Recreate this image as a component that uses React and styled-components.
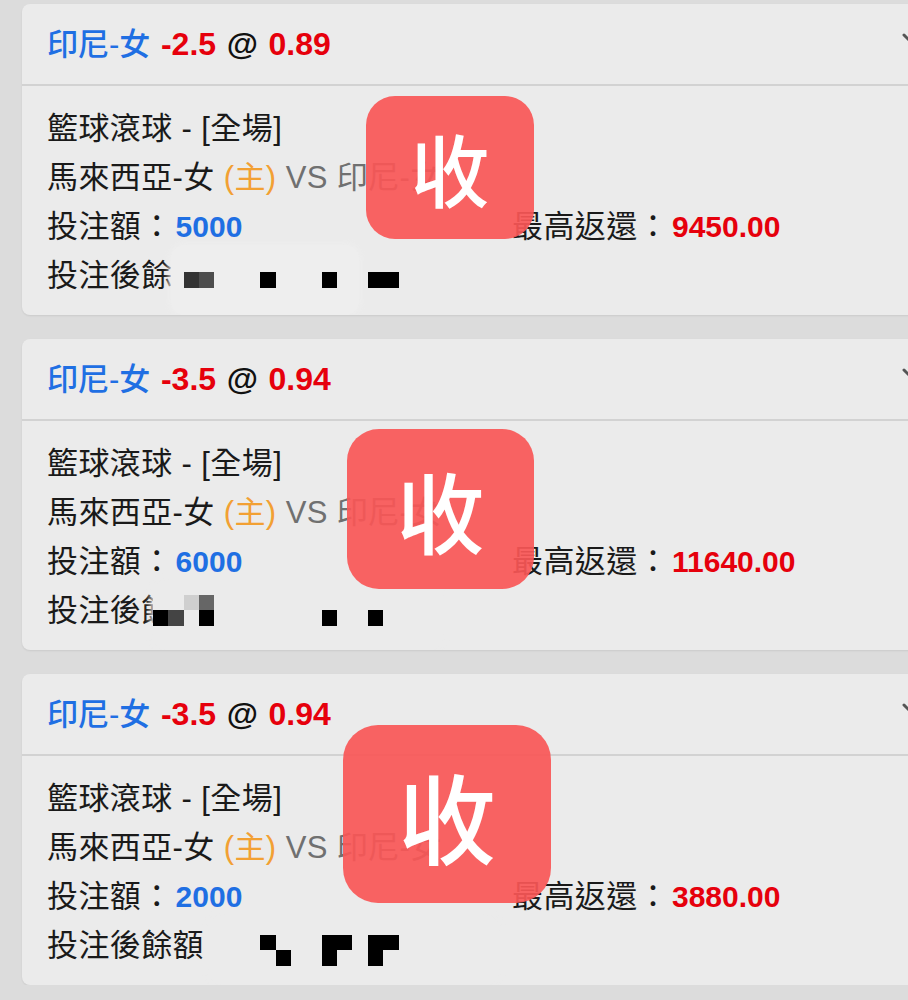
import styled, { createGlobalStyle } from 'styled-components';

const GlobalStyle = createGlobalStyle`
  html, body {
    margin : 0;
    padding : 0;
    background : #dcdcdc;
    overflow : hidden;
  }
  body {
    font-family : "Liberation Sans", "Noto Sans CJK TC", sans-serif;
  }
`;

const bets = [
    {
        handicap : '-2.5', odds : '0.89', stake : '5000', maxReturn : '9450.00',
        stamp : { left : 344, top : 92, width : 168, height : 143 },
        cover : { left : 124, light : true },
        mosaic : { top : 6, cells : [[1, 2, '#333'], [1, 3, '#4d4d4d'], [1, 7, '#000'], [1, 11, '#000'], [1, 14, '#000'], [1, 15, '#000']] },
    },
    {
        handicap : '-3.5', odds : '0.94', stake : '6000', maxReturn : '11640.00',
        stamp : { left : 325, top : 90, width : 187, height : 160 },
        cover : { left : 106 },
        mosaic : { top : 9, cells : [[0, 2, '#cfcfcf'], [0, 3, '#666'], [1, 0, '#000'], [1, 1, '#444'], [1, 3, '#000'], [1, 11, '#000'], [1, 14, '#000']] },
    },
    {
        handicap : '-3.5', odds : '0.94', stake : '2000', maxReturn : '3880.00',
        stamp : { left : 321, top : 51, width : 208, height : 178 },
        cover : { left : 162 },
        mosaic : { top : 14, cells : [[0, 7, '#000'], [1, 8, '#000'], [0, 11, '#000'], [0, 12, '#000'], [1, 11, '#000'], [0, 14, '#000'], [0, 15, '#000'], [1, 14, '#000']] },
    },
];

const Chevron = () => (
    <ChevronSvg viewBox="0 0 24 24" width="24" height="24">
        <path d="M4 8 L12 16 L20 8" fill="none" stroke="#555" strokeWidth="3" strokeLinecap="round" strokeLinejoin="round" />
    </ChevronSvg>
);

const Mosaic = ({ top, cells }) => (
    <MosaicGrid $top={top}>
        {cells.map(([row, col, color]) => (
            <MosaicCell key={`${row}-${col}`} $row={row} $col={col} $color={color} />
        ))}
    </MosaicGrid>
);

const BetCard = ({ bet }) => {
    const { handicap, odds, stake, maxReturn, stamp, cover, mosaic } = bet;

    return (
        <Card>
            <CardHeader>
                <Title>
                    <TeamText>印尼-女</TeamText> <TitleNumber>{ handicap }</TitleNumber> <At>@</At> <TitleNumber>{ odds }</TitleNumber>
                </Title>
                <Chevron />
            </CardHeader>
            <CardBody>
                <Line>籃球滾球 - [全場]</Line>
                <Line>
                    馬來西亞-女 <HomeTag>(主)</HomeTag> <Versus>VS 印尼-女</Versus>
                </Line>
                <AmountRow>
                    <span>投注額：<BlueNumber>{ stake }</BlueNumber></span>
                    <span>最高返還：<RedNumber>{ maxReturn }</RedNumber></span>
                </AmountRow>
                <BalanceLine>
                    投注後餘額：
                    <Cover $left={cover.left} $light={cover.light} />
                    <Mosaic top={mosaic.top} cells={mosaic.cells} />
                </BalanceLine>
            </CardBody>
            <Stamp $left={stamp.left} $top={stamp.top} $width={stamp.width} $height={stamp.height}>收</Stamp>
        </Card>
    );
};

const App = () => (
    <>
        <GlobalStyle />
        <Page>
            {bets.map((bet, i) => <BetCard key={i} bet={bet} />)}
        </Page>
    </>
);

const Page = styled.div`
    width : 908px;
    box-sizing : border-box;
    padding : 4px 0 0 22px;
    display : flex;
    flex-direction : column;
    gap : 24px;
    overflow : hidden;
`;

const Card = styled.div`
    position : relative;
    margin-right : -27px;
    height : 311px;
    background : #ebebeb;
    border-radius : 8px;
    box-shadow : 0 1px 2px rgba(0, 0, 0, 0.08);
    overflow : hidden;
`;

const CardHeader = styled.div`
    height : 80px;
    box-sizing : border-box;
    border-bottom : 2px solid #d2d2d2;
    display : flex;
    align-items : center;
    justify-content : space-between;
    padding : 0 11px 5px 25px;
    height : 82px;
`;

const Title = styled.div`
    font-size : 31px;
    font-weight : 700;
    color : #111;
    white-space : nowrap;
    word-spacing : 2px;
`;

const TeamText = styled.span`
    color : #1f6fe3;
    font-weight : 500;
`;

const TitleNumber = styled.span`
    color : #e6000c;
    font-weight : 700;
    font-size : 32px;
`;

const At = styled.span`
    color : #111;
    font-size : 32px;
`;

const ChevronSvg = styled.svg`
    flex-shrink : 0;
    margin-top : -6px;
`;

const CardBody = styled.div`
    padding : 18px 0 15px 25px;
    font-size : 31px;
    line-height : 49px;
    color : #1a1a1a;
    letter-spacing : 0.4px;
`;

const Line = styled.div`
    white-space : nowrap;
`;

const HomeTag = styled.span`
    color : #f2a033;
`;

const Versus = styled.span`
    color : #707070;
`;

const AmountRow = styled.div`
    display : grid;
    grid-template-columns : 465px auto;
    white-space : nowrap;
`;

const BlueNumber = styled.span`
    color : #1f6fe3;
    font-weight : 700;
    font-size : 30px;
    letter-spacing : 0;
    margin-left : 3px;
`;

const RedNumber = styled.span`
    color : #e6000c;
    font-weight : 700;
    font-size : 30px;
    letter-spacing : 0;
    margin-left : 3px;
`;

const BalanceLine = styled.div`
    position : relative;
    white-space : nowrap;
`;

const Cover = styled.div`
    position : absolute;
    left : ${({ $left }) => $left}px;
    top : -6px;
    width : ${({ $light }) => $light ? 188 : 290}px;
    height : 70px;
    background : ${({ $light }) => $light ? '#eeeeee' : '#ebebeb'};
    box-shadow : 0 0 6px 2px ${({ $light }) => $light ? '#eeeeee' : '#ebebeb'};
    border-radius : 14px;
`;

const MosaicGrid = styled.div`
    position : absolute;
    left : 106px;
    top : ${({ $top }) => $top}px;
    display : grid;
    grid-template-columns : repeat(16, 15.35px);
    grid-template-rows : repeat(2, 15.35px);
`;

const MosaicCell = styled.div`
    grid-row : ${({ $row }) => $row + 1};
    grid-column : ${({ $col }) => $col + 1};
    background : ${({ $color }) => $color};
`;

const Stamp = styled.div`
    position : absolute;
    left : ${({ $left }) => $left}px;
    top : ${({ $top }) => $top}px;
    width : ${({ $width }) => $width}px;
    height : ${({ $height }) => $height}px;
    border-radius : ${({ $width }) => Math.round($width * 0.17)}px;
    background : rgba(249, 86, 86, 0.92);
    color : #fff;
    display : flex;
    align-items : center;
    justify-content : center;
    font-family : "Noto Sans CJK TC", sans-serif;
    font-weight : 500;
    font-size : ${({ $width }) => Math.round($width * 0.47)}px;
    line-height : 1;
`;

export default App;
